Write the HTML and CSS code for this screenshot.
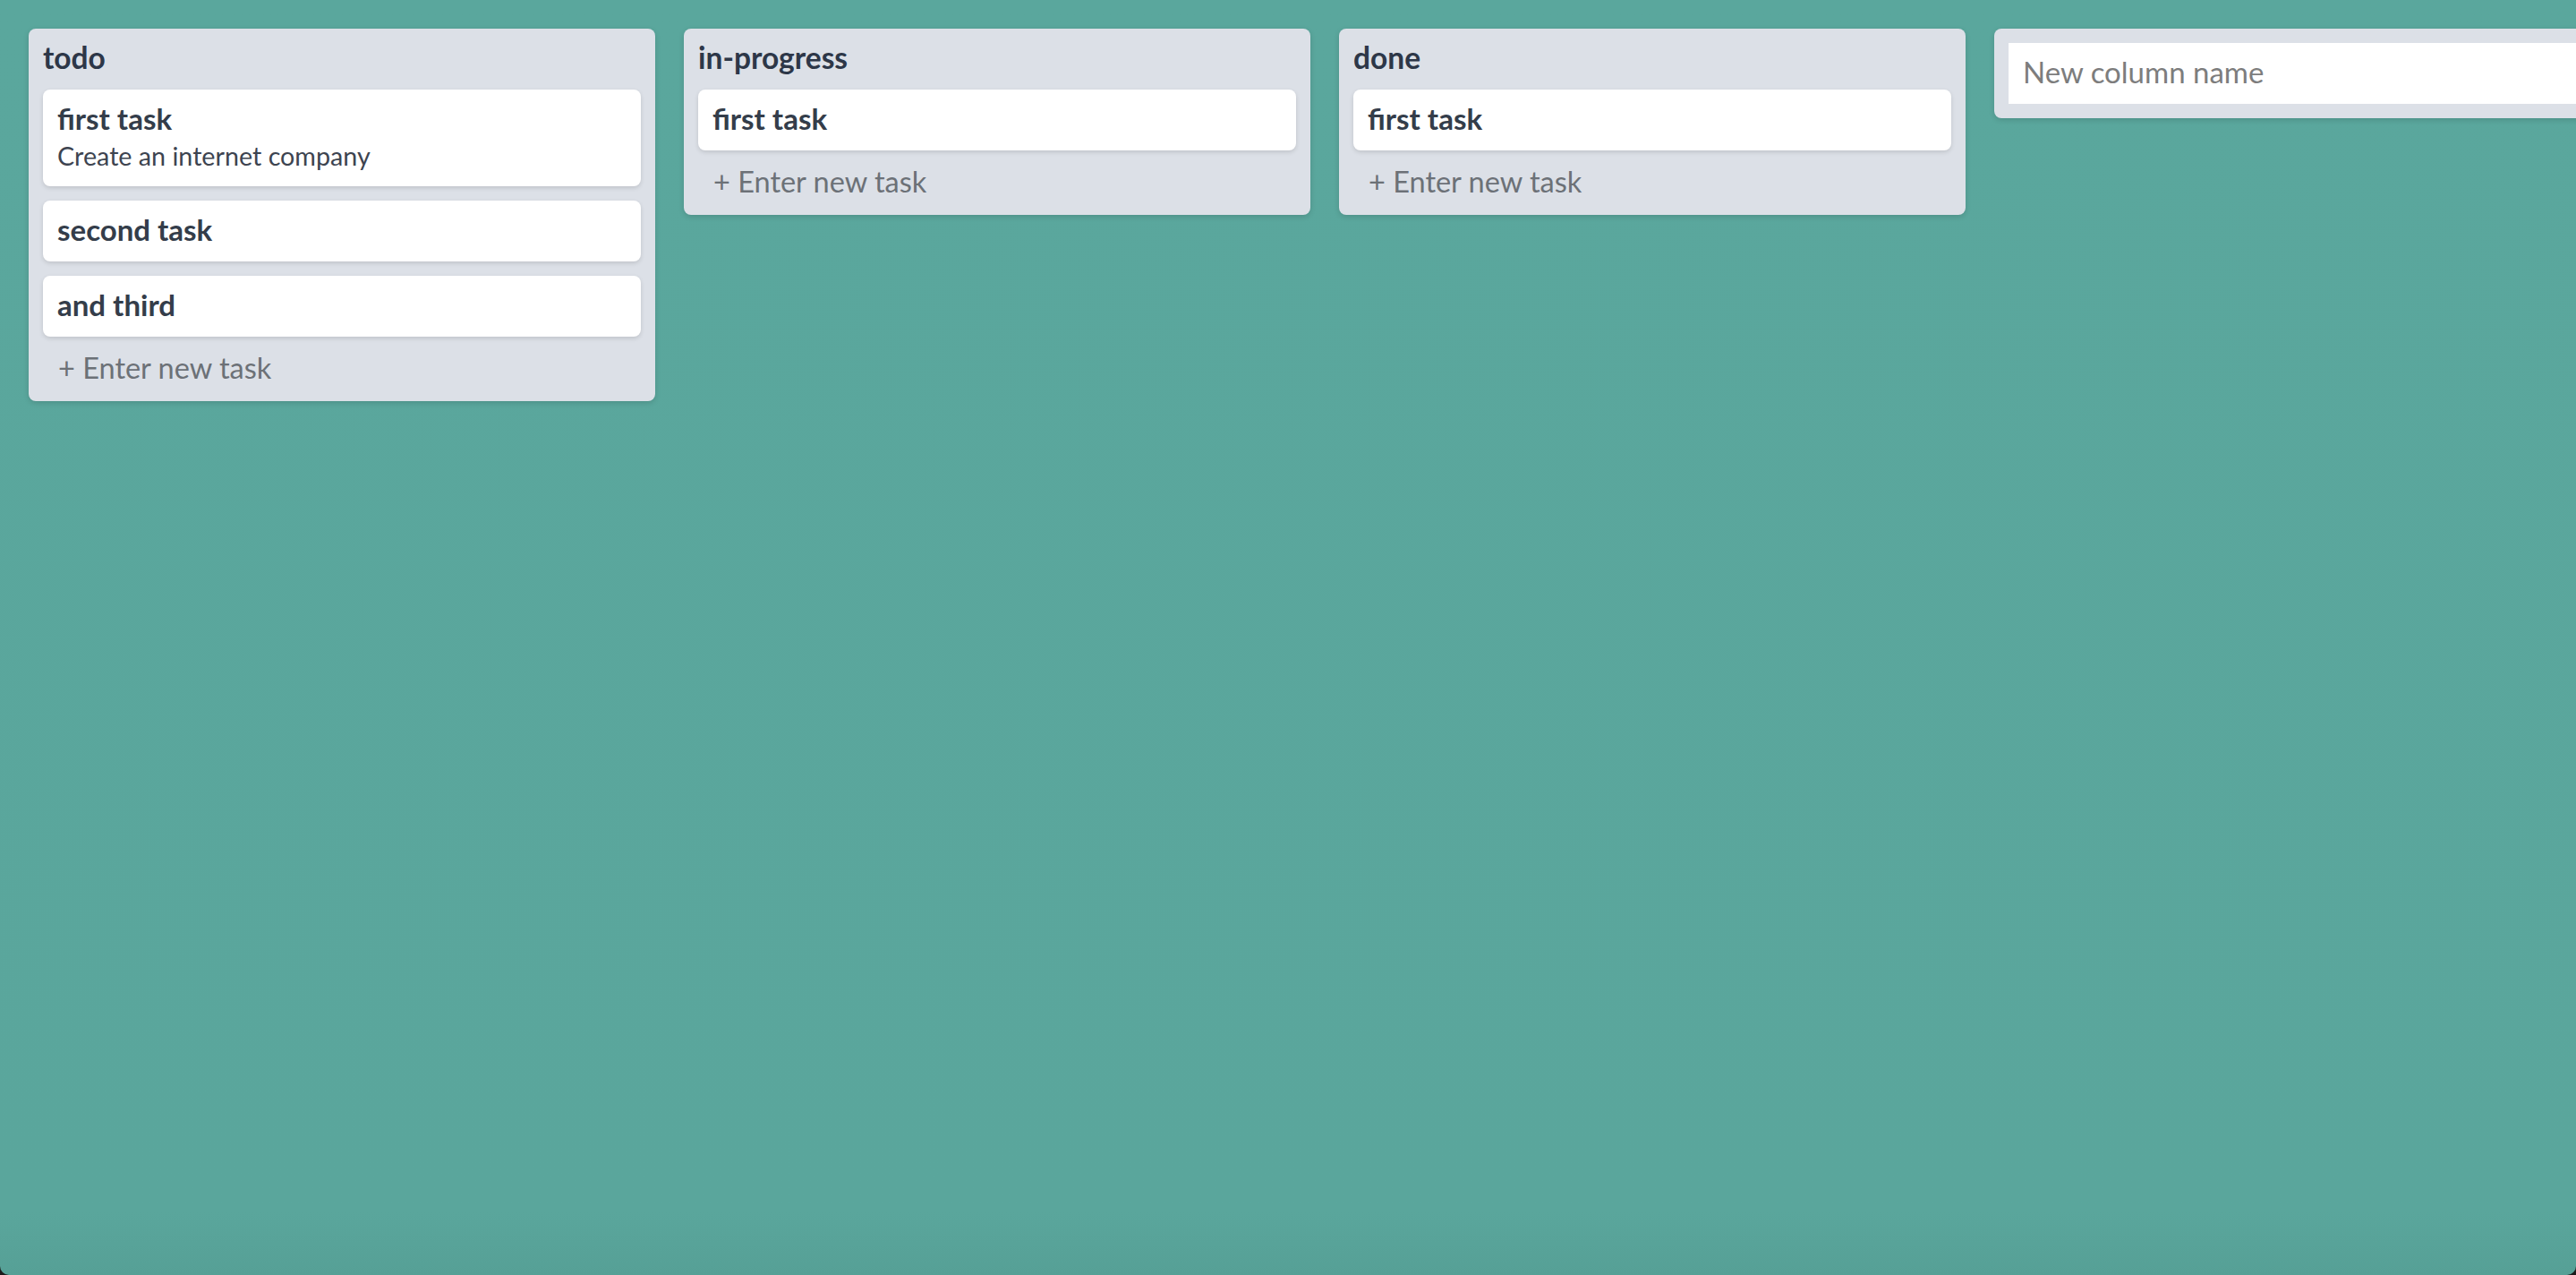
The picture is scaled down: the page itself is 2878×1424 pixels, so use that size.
FILE: index.html
```html
<!DOCTYPE html>
<html lang="en">
<head>
<meta charset="utf-8">
<title>Board</title>
<link rel="stylesheet" href="styles.css">
</head>
<body>
<div class="app">
  <div class="board">
    <section class="column">
      <h2 class="column-title">todo</h2>
      <div class="cards">
        <div class="card">
          <div class="card-title">first task</div>
          <div class="card-desc">Create an internet company</div>
        </div>
        <div class="card">
          <div class="card-title">second task</div>
        </div>
        <div class="card">
          <div class="card-title">and third</div>
        </div>
      </div>
      <div class="add-task">+ Enter new task</div>
    </section>
    <section class="column">
      <h2 class="column-title">in-progress</h2>
      <div class="cards">
        <div class="card">
          <div class="card-title">first task</div>
        </div>
      </div>
      <div class="add-task">+ Enter new task</div>
    </section>
    <section class="column">
      <h2 class="column-title">done</h2>
      <div class="cards">
        <div class="card">
          <div class="card-title">first task</div>
        </div>
      </div>
      <div class="add-task">+ Enter new task</div>
    </section>
    <section class="column column-new">
      <input class="new-column-input" type="text" placeholder="New column name">
    </section>
  </div>
</div>
</body>
</html>
```

FILE: styles.css
```css
* {
  box-sizing: border-box;
}

html {
  background: #1b1b1b;
  height: 100%;
}

body {
  margin: 0;
  height: 100%;
  overflow: hidden;
  font-family: Lato, "Noto Sans", "Liberation Sans", sans-serif;
}

.app {
  height: 100vh;
  overflow: hidden;
  border-radius: 0 0 10px 10px;
  background: linear-gradient(to bottom, #5aa79d 0%, #5aa69c calc(100% - 70px), #56a096 100%);
}

.board {
  display: flex;
  align-items: flex-start;
  gap: 32px;
  padding: 32px;
}

.column {
  flex: 0 0 700px;
  background: #dce0e7;
  border-radius: 8px;
  padding: 13px 16px 17px;
  box-shadow: 0 2px 6px rgba(0, 0, 0, 0.14);
}

.column-title {
  margin: 0 0 17px;
  font-size: 33.5px;
  line-height: 38px;
  font-weight: 700;
  color: #2d3748;
}

.cards {
  display: flex;
  flex-direction: column;
  gap: 16px;
}

.card {
  background: #ffffff;
  border-radius: 8px;
  padding: 12px 16px 16px;
  box-shadow: 0 2px 5px rgba(0, 0, 0, 0.13);
}

.card-title {
  font-size: 33px;
  line-height: 40px;
  font-weight: 700;
  color: #343d4a;
}

.card-desc {
  margin-top: 4px;
  font-size: 28.7px;
  line-height: 36px;
  font-weight: 400;
  color: #3d4450;
}

.add-task {
  margin-top: 15px;
  padding: 0 17px;
  font-size: 32.5px;
  line-height: 40px;
  font-weight: 400;
  color: #6c7177;
}

.column-new {
  padding: 16px;
}

.new-column-input {
  display: block;
  width: 100%;
  height: 68px;
  border: 0;
  border-radius: 0;
  outline: none;
  padding: 0 16px 4px;
  background: #ffffff;
  font-family: Lato, "Noto Sans", "Liberation Sans", sans-serif;
  font-size: 33px;
  color: #333;
}

.new-column-input::placeholder {
  color: #7d7d7d;
  font-weight: 400;
}
```
